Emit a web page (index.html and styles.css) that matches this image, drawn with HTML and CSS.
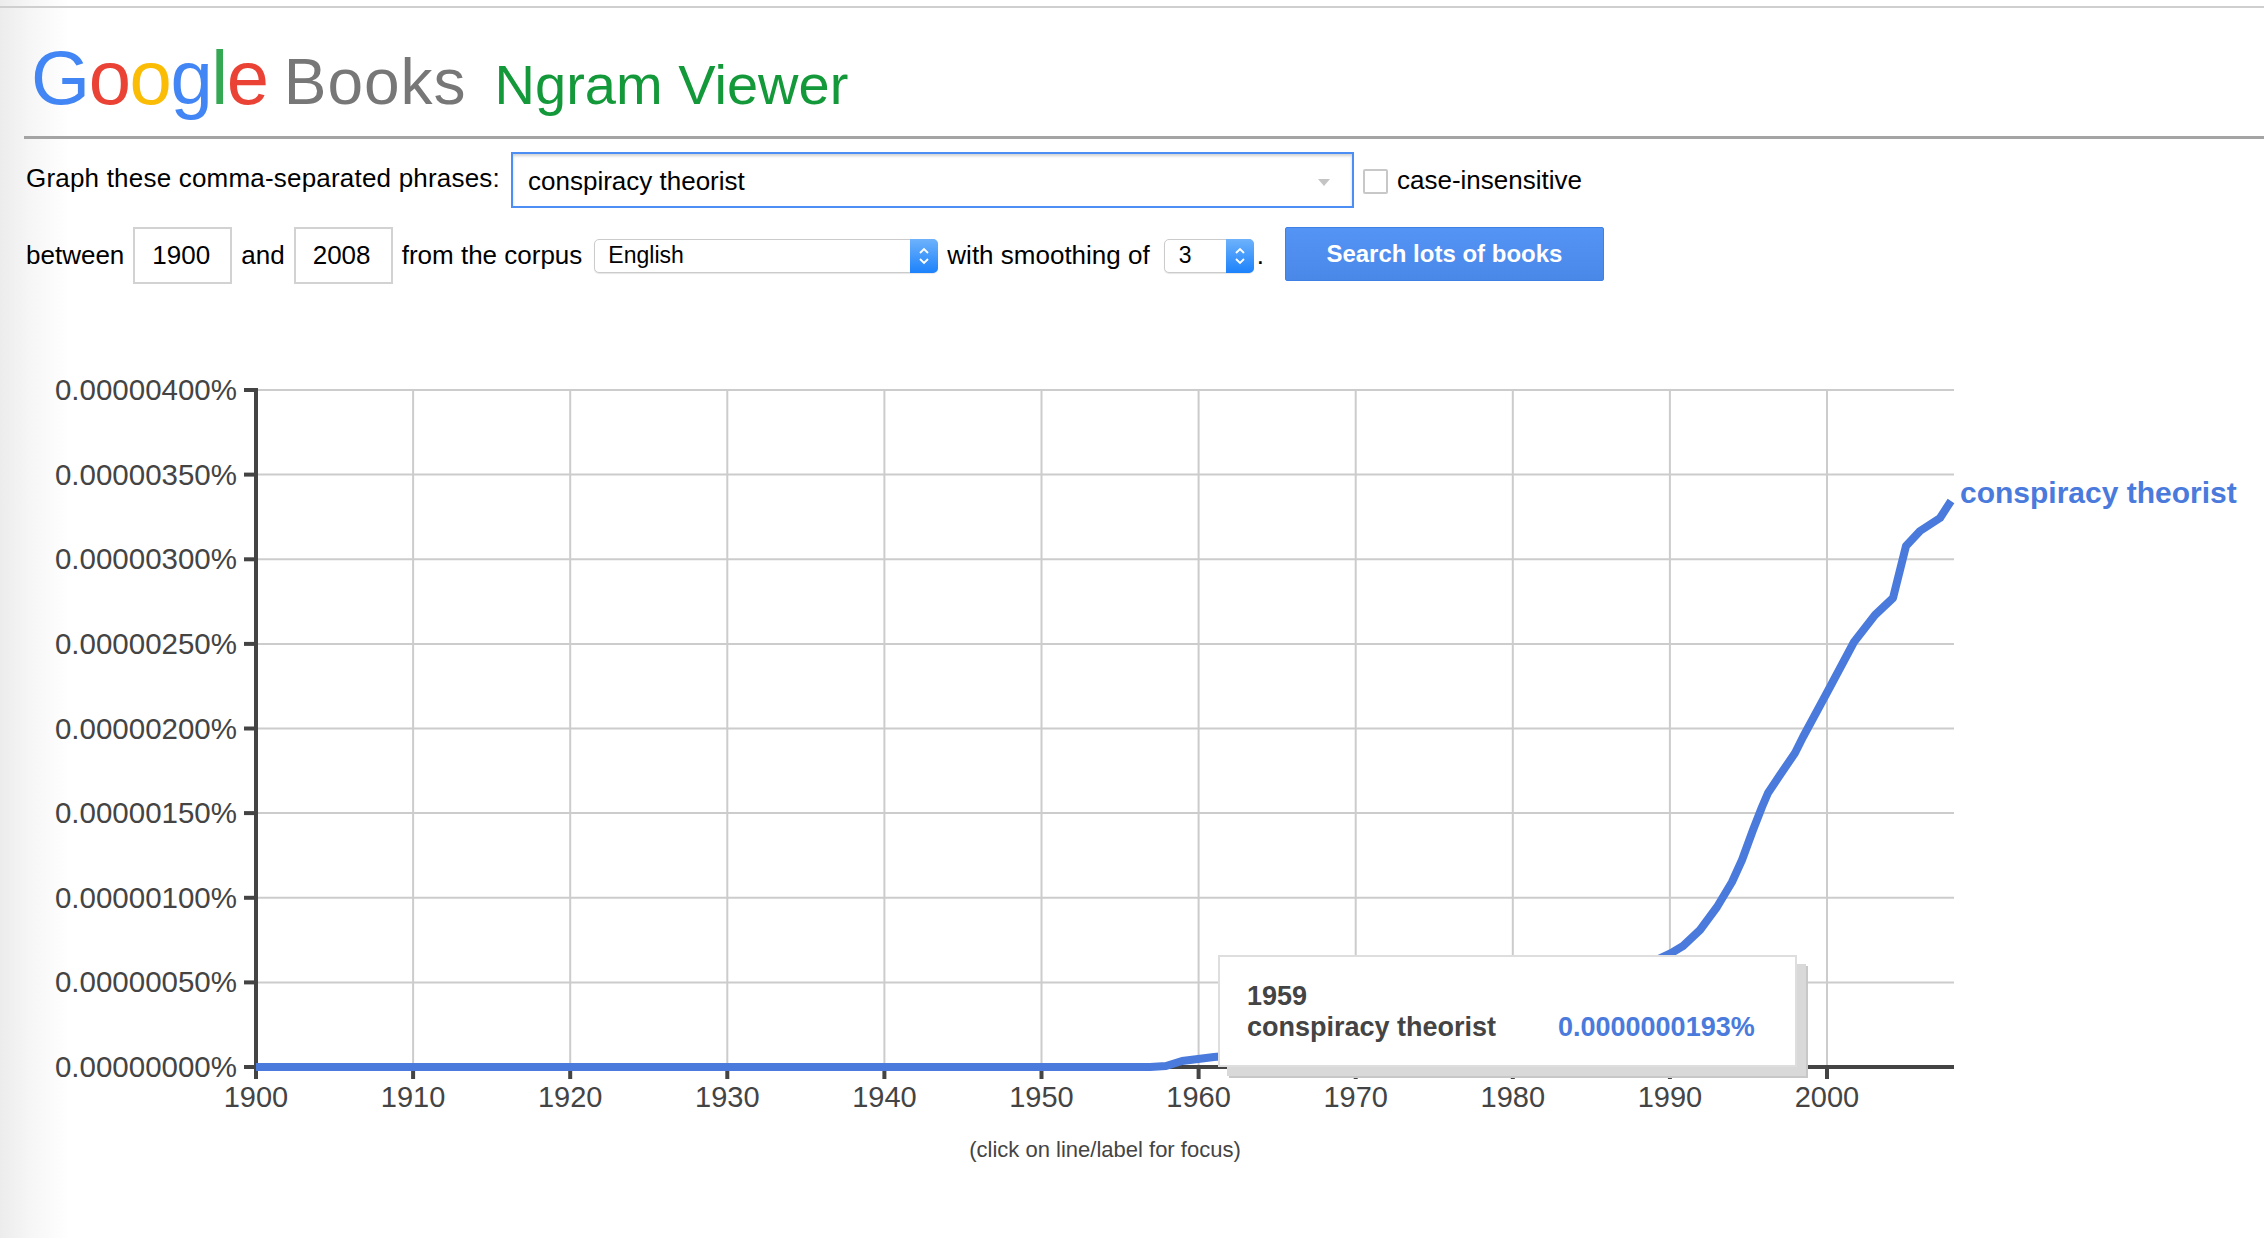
FILE: index.html
```html
<!DOCTYPE html>
<html lang="en">
<head>
<meta charset="utf-8">
<title>Google Books Ngram Viewer</title>
<link rel="stylesheet" href="styles.css">
</head>
<body>
<div class="topline"></div>
<div class="page">
  <header class="header">
    <span class="google"><span class="c-blue">G</span><span class="c-red">o</span><span class="c-yellow">o</span><span class="c-blue">g</span><span class="c-green">l</span><span class="c-red">e</span></span>
    <span class="books">Books</span>
    <span class="ngram">Ngram Viewer</span>
  </header>

  <div class="form">
    <div class="row row1">
      <span class="label label-phrases">Graph these comma-separated phrases:</span>
      <div class="phrase-input">
        <span class="phrase-text">conspiracy theorist</span>
        <span class="caret"></span>
      </div>
      <span class="checkbox"></span>
      <span class="label">case-insensitive</span>
    </div>
    <div class="row row2">
      <span class="label">between</span>
      <div class="year-box">1900</div>
      <span class="label">and</span>
      <div class="year-box">2008</div>
      <span class="label">from the corpus</span>
      <div class="select select-corpus">
        <span class="select-val">English</span>
        <span class="stepper"><svg width="12" height="22" viewBox="0 0 12 22"><polyline points="2,8 6,4 10,8" fill="none" stroke="#fff" stroke-width="1.8"/><polyline points="2,14 6,18 10,14" fill="none" stroke="#fff" stroke-width="1.8"/></svg></span>
      </div>
      <span class="label">with smoothing of</span>
      <div class="select select-smooth">
        <span class="select-val">3</span>
        <span class="stepper"><svg width="12" height="22" viewBox="0 0 12 22"><polyline points="2,8 6,4 10,8" fill="none" stroke="#fff" stroke-width="1.8"/><polyline points="2,14 6,18 10,14" fill="none" stroke="#fff" stroke-width="1.8"/></svg></span>
      </div>
      <span class="label period">.</span>
      <div class="search-btn">Search lots of books</div>
    </div>
  </div>

  <div class="chart">
    <svg class="chart-svg" width="2240" height="830" viewBox="24 360 2240 830">
      <g class="grid">
        <line x1="256" y1="390" x2="1954" y2="390"/>
        <line x1="256" y1="474.6" x2="1954" y2="474.6"/>
        <line x1="256" y1="559.3" x2="1954" y2="559.3"/>
        <line x1="256" y1="643.9" x2="1954" y2="643.9"/>
        <line x1="256" y1="728.5" x2="1954" y2="728.5"/>
        <line x1="256" y1="813.1" x2="1954" y2="813.1"/>
        <line x1="256" y1="897.8" x2="1954" y2="897.8"/>
        <line x1="256" y1="982.4" x2="1954" y2="982.4"/>
        <line x1="413.1" y1="390" x2="413.1" y2="1067"/>
        <line x1="570.2" y1="390" x2="570.2" y2="1067"/>
        <line x1="727.3" y1="390" x2="727.3" y2="1067"/>
        <line x1="884.4" y1="390" x2="884.4" y2="1067"/>
        <line x1="1041.5" y1="390" x2="1041.5" y2="1067"/>
        <line x1="1198.6" y1="390" x2="1198.6" y2="1067"/>
        <line x1="1355.7" y1="390" x2="1355.7" y2="1067"/>
        <line x1="1512.8" y1="390" x2="1512.8" y2="1067"/>
        <line x1="1669.9" y1="390" x2="1669.9" y2="1067"/>
        <line x1="1827" y1="390" x2="1827" y2="1067"/>
      </g>
      <g class="axis">
        <line x1="256" y1="388" x2="256" y2="1069"/>
        <line x1="254" y1="1067" x2="1954" y2="1067"/>
        <line x1="244" y1="390" x2="256" y2="390"/>
        <line x1="244" y1="474.6" x2="256" y2="474.6"/>
        <line x1="244" y1="559.3" x2="256" y2="559.3"/>
        <line x1="244" y1="643.9" x2="256" y2="643.9"/>
        <line x1="244" y1="728.5" x2="256" y2="728.5"/>
        <line x1="244" y1="813.1" x2="256" y2="813.1"/>
        <line x1="244" y1="897.8" x2="256" y2="897.8"/>
        <line x1="244" y1="982.4" x2="256" y2="982.4"/>
        <line x1="244" y1="1067" x2="256" y2="1067"/>
        <line x1="256" y1="1067" x2="256" y2="1079"/>
        <line x1="413.1" y1="1067" x2="413.1" y2="1079"/>
        <line x1="570.2" y1="1067" x2="570.2" y2="1079"/>
        <line x1="727.3" y1="1067" x2="727.3" y2="1079"/>
        <line x1="884.4" y1="1067" x2="884.4" y2="1079"/>
        <line x1="1041.5" y1="1067" x2="1041.5" y2="1079"/>
        <line x1="1198.6" y1="1067" x2="1198.6" y2="1079"/>
        <line x1="1355.7" y1="1067" x2="1355.7" y2="1079"/>
        <line x1="1512.8" y1="1067" x2="1512.8" y2="1079"/>
        <line x1="1669.9" y1="1067" x2="1669.9" y2="1079"/>
        <line x1="1827" y1="1067" x2="1827" y2="1079"/>
      </g>
      <g class="ylabels">
        <text x="237" y="400">0.00000400%</text>
        <text x="237" y="484.6">0.00000350%</text>
        <text x="237" y="569.3">0.00000300%</text>
        <text x="237" y="653.9">0.00000250%</text>
        <text x="237" y="738.5">0.00000200%</text>
        <text x="237" y="823.1">0.00000150%</text>
        <text x="237" y="907.8">0.00000100%</text>
        <text x="237" y="992.4">0.00000050%</text>
        <text x="237" y="1077">0.00000000%</text>
      </g>
      <g class="xlabels">
        <text x="256" y="1107">1900</text>
        <text x="413.1" y="1107">1910</text>
        <text x="570.2" y="1107">1920</text>
        <text x="727.3" y="1107">1930</text>
        <text x="884.4" y="1107">1940</text>
        <text x="1041.5" y="1107">1950</text>
        <text x="1198.6" y="1107">1960</text>
        <text x="1355.7" y="1107">1970</text>
        <text x="1512.8" y="1107">1980</text>
        <text x="1669.9" y="1107">1990</text>
        <text x="1827" y="1107">2000</text>
      </g>
      <polyline class="series" points="256,1067 1150,1067 1166,1066 1182,1061 1198,1059 1214,1057 1260,1053 1320,1047 1400,1036 1480,1020 1560,998 1620,978 1650,963 1673,952 1683,946 1700,930 1717,907 1732,882 1742,860 1753,830 1762,807 1768,793 1780,775 1795,753 1803,737 1823,700 1830,687 1854,642 1875,615 1893,598 1906,546 1920,531 1940,518 1951,501"/>
      <text class="series-label" x="1960" y="503">conspiracy theorist</text>
      <text class="focus-note" x="1105" y="1157">(click on line/label for focus)</text>
    </svg>
    <div class="tooltip">
      <div class="tt-year">1959</div>
      <div class="tt-row">
        <span class="tt-name">conspiracy theorist</span>
        <span class="tt-value">0.0000000193%</span>
      </div>
    </div>
  </div>
</div>
</body>
</html>
```

FILE: styles.css
```css
html, body {
  margin: 0;
  padding: 0;
}
body {
  width: 2264px;
  min-height: 1238px;
  font-family: "Liberation Sans", Arial, Helvetica, sans-serif;
  color: #000;
  background: linear-gradient(to right, #ececec 0px, #f6f6f6 30px, #ffffff 70px);
  overflow: hidden;
}
.topline {
  height: 6px;
  border-bottom: 2px solid #cfcfcf;
}
.page {
  padding-left: 24px;
}

/* header */
.header {
  display: flex;
  align-items: baseline;
  padding: 32px 0 20px 7px;
  border-bottom: 3px solid #a4a4a4;
}
.header span {
  line-height: 1;
}
.google {
  font-size: 76px;
  letter-spacing: -1.4px;
}
.c-blue { color: #4285f4; }
.c-red { color: #ea4335; }
.c-yellow { color: #fbbc05; }
.c-green { color: #34a853; }
.books {
  font-size: 64px;
  color: #777777;
  letter-spacing: 1px;
  margin-left: 16px;
}
.ngram {
  font-size: 56px;
  color: #14993a;
  margin-left: 28px;
}

/* form */
.form {
  padding-left: 2px;
}
.row {
  display: flex;
  align-items: center;
  gap: 9px;
  font-size: 26px;
}
.row1 {
  margin-top: 13px;
  height: 56px;
}
.row2 {
  margin-top: 19px;
  height: 57px;
}
.label {
  white-space: nowrap;
}
.label-phrases {
  letter-spacing: 0.2px;
  margin-right: 2px;
  margin-top: -3px;
}
.phrase-input {
  box-sizing: border-box;
  width: 843px;
  height: 56px;
  border: 2px solid #4d8ef5;
  box-shadow: inset 0 2px 3px rgba(0, 0, 0, 0.18);
  display: flex;
  align-items: center;
  padding-left: 15px;
  background: #fff;
}
.phrase-text {
  flex: 1;
  padding-top: 2px;
}
.caret {
  width: 0;
  height: 0;
  border-left: 6px solid transparent;
  border-right: 6px solid transparent;
  border-top: 7px solid #c4c4c4;
  margin-right: 22px;
  margin-top: 4px;
}
.checkbox {
  box-sizing: border-box;
  width: 25px;
  height: 25px;
  border: 2px solid #c8c8c8;
  border-radius: 2px;
  background: #fff;
  margin-top: 2px;
}
.year-box {
  box-sizing: border-box;
  width: 99px;
  height: 57px;
  border: 2px solid #d2d2d2;
  padding-left: 17px;
  display: flex;
  align-items: center;
  background: #fff;
}
.select {
  box-sizing: border-box;
  height: 34px;
  display: flex;
  align-items: stretch;
  border: 1px solid #cbcbcb;
  border-radius: 5px;
  background: #fff;
  box-shadow: 0 1px 1px rgba(0, 0, 0, 0.1);
  font-size: 23px;
  margin-left: 3px;
}
.select-corpus {
  width: 344px;
}
.select-smooth {
  width: 90px;
  margin-left: 5px;
}
.select-val {
  flex: 1;
  display: flex;
  align-items: center;
  padding-left: 13px;
}
.select-smooth .select-val {
  padding-left: 14px;
}
.stepper {
  width: 28px;
  margin: -1px -1px -1px 0;
  border-radius: 0 5px 5px 0;
  background: linear-gradient(#6eb2fb, #1c82fb);
  display: flex;
  align-items: center;
  justify-content: center;
}
.period {
  margin-left: -6px;
}
.search-btn {
  box-sizing: border-box;
  width: 319px;
  height: 54px;
  margin-left: 12px;
  margin-top: -3px;
  border: 1px solid #3f80e4;
  border-radius: 2px;
  background: linear-gradient(#5494f5, #4a88e8);
  color: #fff;
  font-weight: bold;
  font-size: 24px;
  display: flex;
  align-items: center;
  justify-content: center;
}

/* chart */
.chart {
  position: relative;
  margin-top: 76px;
  width: 2240px;
  height: 830px;
}
.chart-svg {
  display: block;
}
.grid line {
  stroke: #cccccc;
  stroke-width: 2;
}
.axis line {
  stroke: #444444;
  stroke-width: 4;
}
.ylabels text {
  font-family: "Liberation Sans", Arial, sans-serif;
  font-size: 29.5px;
  fill: #444444;
  text-anchor: end;
}
.xlabels text {
  font-family: "Liberation Sans", Arial, sans-serif;
  font-size: 29px;
  fill: #444444;
  text-anchor: middle;
}
.series {
  fill: none;
  stroke: #4a7adc;
  stroke-width: 8;
  stroke-linejoin: round;
  stroke-linecap: butt;
}
.series-label {
  font-family: "Liberation Sans", Arial, sans-serif;
  font-size: 30px;
  font-weight: bold;
  fill: #4a7adc;
}
.focus-note {
  font-family: "Liberation Sans", Arial, sans-serif;
  font-size: 22px;
  fill: #444444;
  text-anchor: middle;
}
.tooltip {
  position: absolute;
  left: 1194px;
  top: 595px;
  box-sizing: border-box;
  width: 579px;
  height: 112px;
  background: #fff;
  border: 2px solid #dedede;
  box-shadow: 9px 9px 0 0 #d9d9d9, 11px 11px 0 0 #c8c8c8;
  padding: 24px 0 0 27px;
  font-size: 27px;
  line-height: 31px;
  font-weight: bold;
  color: #444444;
}
.tt-row {
  display: flex;
}
.tt-name {
  width: 311px;
}
.tt-value {
  color: #4a7adc;
}
```
